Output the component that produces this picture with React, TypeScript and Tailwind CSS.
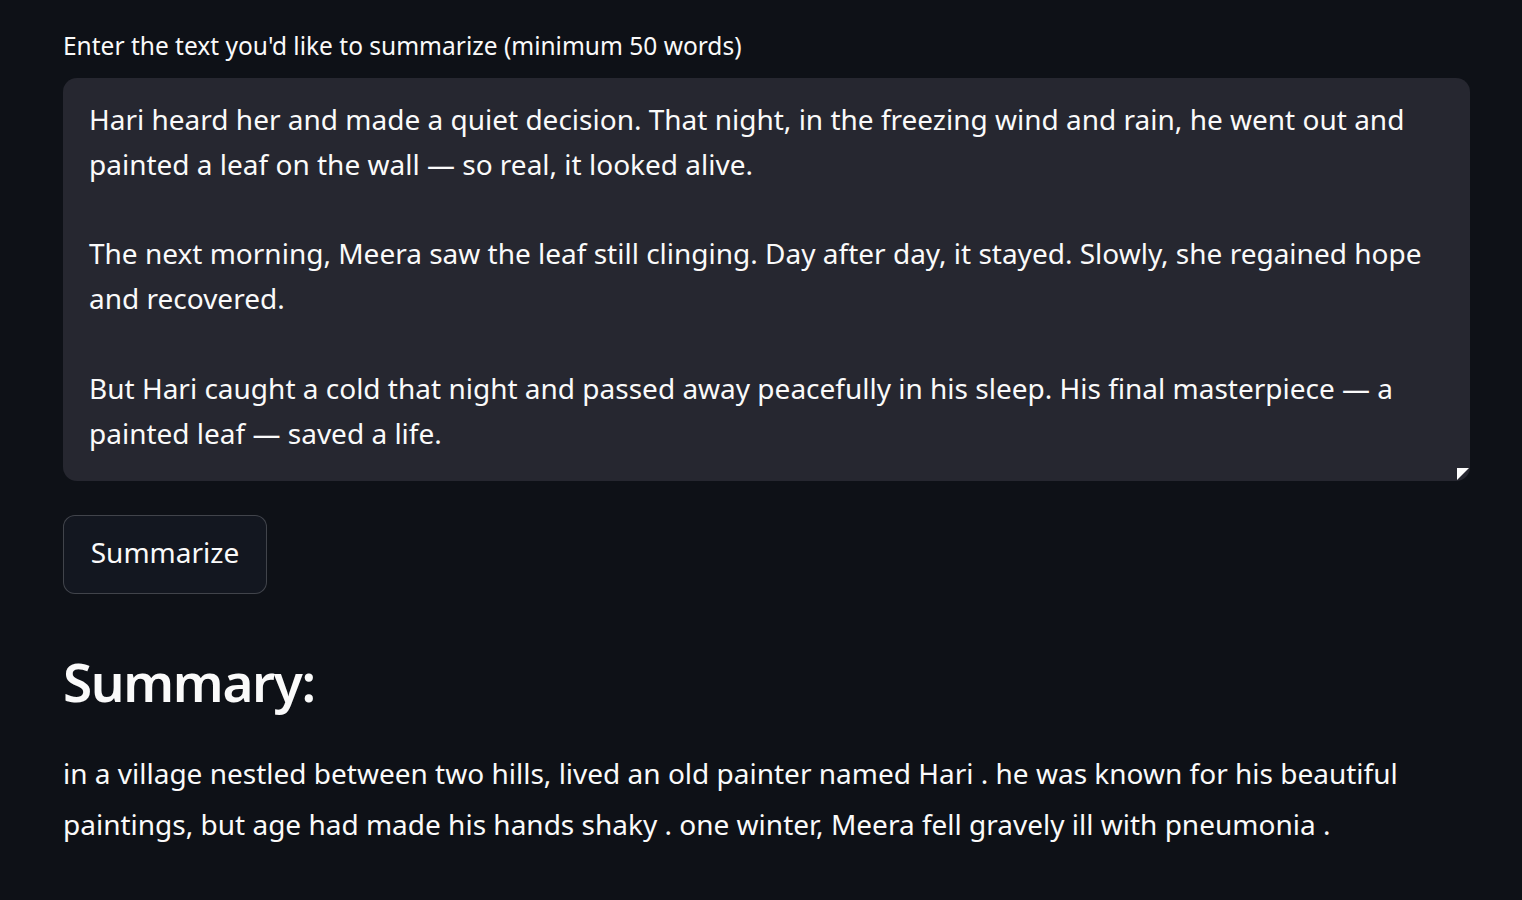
import React from 'react';

const sourceText = `Hari heard her and made a quiet decision. That night, in the freezing wind and rain, he went out and painted a leaf on the wall — so real, it looked alive.

The next morning, Meera saw the leaf still clinging. Day after day, it stayed. Slowly, she regained hope and recovered.

But Hari caught a cold that night and passed away peacefully in his sleep. His final masterpiece — a painted leaf — saved a life.`;

const summary =
  'in a village nestled between two hills, lived an old painter named Hari . he was known for his beautiful paintings, but age had made his hands shaky . one winter, Meera fell gravely ill with pneumonia .';

export default function App() {
  return (
    <div
      className="min-h-[900px] bg-[#0e1117] text-[#fafafa] pl-[63px] pr-[52px] pt-[30px] flex flex-col items-start"
      style={{ fontFamily: '"Noto Sans", "Open Sans", sans-serif' }}
    >
      <label className="block text-[24.5px] leading-[32px] mb-[16px]">
        Enter the text you'd like to summarize (minimum 50 words)
      </label>
      <div className="relative w-full">
        <textarea
          readOnly
          value={sourceText}
          className="block w-full h-[403px] resize-none rounded-[14px] bg-[#262730] px-[26px] pt-[19px] text-[28px] leading-[44.8px] text-[#fafafa] outline-none overflow-hidden"
        />
        <svg className="absolute right-[1px] bottom-[1px]" width="12" height="12" viewBox="0 0 12 12">
          <path d="M0 0H12L0 12Z" fill="#ffffff" />
        </svg>
      </div>

      <button className="mt-[34px] h-[79px] w-[204px] rounded-[12px] border border-[#fafafa]/20 bg-[#131720] pb-[6px] text-[28px] leading-[36px] text-[#fafafa]">
        Summarize
      </button>

      <h2 className="mt-[52px] text-[53px] font-semibold leading-[72px] tracking-[-0.025em]">Summary:</h2>

      <p className="mt-[30px] text-[28px] leading-[51px]">{summary}</p>
    </div>
  );
}
